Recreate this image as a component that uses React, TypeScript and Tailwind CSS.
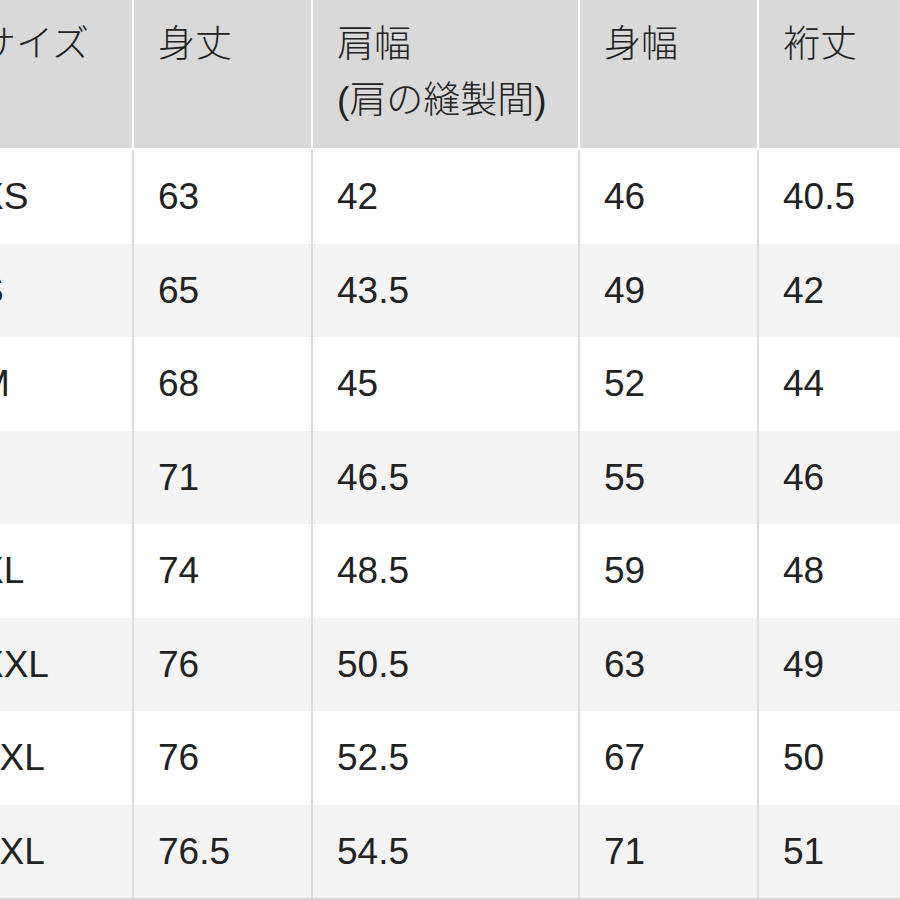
const headers: string[][] = [
  ['サイズ'],
  ['身丈'],
  ['肩幅', '(肩の縫製間)'],
  ['身幅'],
  ['裄丈'],
];

const rows: string[][] = [
  ['XS', '63', '42', '46', '40.5'],
  ['S', '65', '43.5', '49', '42'],
  ['M', '68', '45', '52', '44'],
  ['L', '71', '46.5', '55', '46'],
  ['XL', '74', '48.5', '59', '48'],
  ['XXL', '76', '50.5', '63', '49'],
  ['3XL', '76', '52.5', '67', '50'],
  ['4XL', '76.5', '54.5', '71', '51'],
];

// the table is wider than the shot, the first column is cut on the left
const cols = 'grid grid-cols-[179px_179px_267px_179px_179px]';

export default function App() {
  return (
    <div
      className="w-[900px] h-[900px] overflow-hidden bg-white text-[#222222]"
      style={{ fontFamily: '"Liberation Sans", "Noto Sans CJK JP", sans-serif' }}
    >
      <div className="ml-[-45px] w-[983px]">
        <div className={`${cols} h-[150px] border-b-2 border-white bg-[#d9d9d9]`}>
          {headers.map((lines, i) => (
            <div key={i} className="pl-6 pt-[17px] border-r-2 border-white text-[37px] font-light">
              {lines.map(line => (
                <div key={line} className="h-[56px] leading-[56px] whitespace-nowrap">
                  {line}
                </div>
              ))}
            </div>
          ))}
        </div>

        {rows.map((row, r) => (
          <div key={row[0]} className={`${cols} h-[93.5px] ${r % 2 === 1 ? 'bg-[#f4f4f4]' : 'bg-white'}`}>
            {row.map((cell, c) => (
              <div
                key={c}
                className={`flex items-center border-r-2 border-[#dcdcdc] text-[37px] leading-none whitespace-nowrap ${
                  c === 0 ? 'pl-[24px]' : 'pl-6'
                }`}
              >
                {cell}
              </div>
            ))}
          </div>
        ))}
        <div className="h-[2px] bg-[#d4d4d4]" />
      </div>
    </div>
  );
}
